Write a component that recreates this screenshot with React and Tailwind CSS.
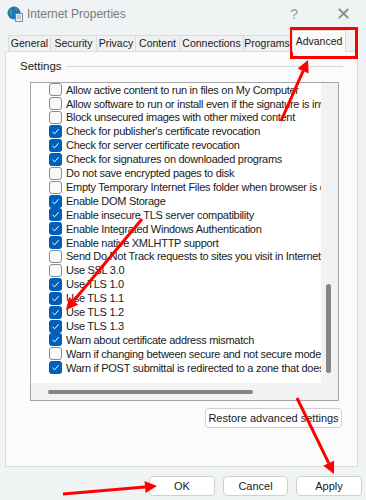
const items = [
  ["Allow active content to run in files on My Computer", false],
  ["Allow software to run or install even if the signature is invalid", false],
  ["Block unsecured images with other mixed content", false],
  ["Check for publisher's certificate revocation", true],
  ["Check for server certificate revocation", true],
  ["Check for signatures on downloaded programs", true],
  ["Do not save encrypted pages to disk", false],
  ["Empty Temporary Internet Files folder when browser is closed", false],
  ["Enable DOM Storage", true],
  ["Enable insecure TLS server compatibility", true],
  ["Enable Integrated Windows Authentication", true],
  ["Enable native XMLHTTP support", true],
  ["Send Do Not Track requests to sites you visit in Internet Explorer", false],
  ["Use SSL 3.0", false],
  ["Use TLS 1.0", true],
  ["Use TLS 1.1", true],
  ["Use TLS 1.2", true],
  ["Use TLS 1.3", true],
  ["Warn about certificate address mismatch", true],
  ["Warn if changing between secure and not secure mode", false],
  ["Warn if POST submittal is redirected to a zone that does not permit posts", true],
];

const tabs = [
  ["General", 42],
  ["Security", 46],
  ["Privacy", 39],
  ["Content", 44],
  ["Connections", 64],
  ["Programs", 47],
];

function Check({ on }) {
  if (!on) {
    return <span className="w-[13px] h-[13px] shrink-0 rounded-[3px] border border-[#8c8c8c] bg-[#f9f9f9]" />;
  }
  return (
    <span className="w-[13px] h-[13px] shrink-0 rounded-[3px] bg-[#005fb8] flex items-center justify-center">
      <svg width="9" height="9" viewBox="0 0 9 9">
        <path d="M1.5 4.8 L3.6 6.8 L7.6 2.2" fill="none" stroke="white" strokeWidth="1" />
      </svg>
    </span>
  );
}

function Arrow({ x1, y1, x2, y2 }) {
  const dx = x2 - x1;
  const dy = y2 - y1;
  const len = Math.hypot(dx, dy);
  const ux = dx / len;
  const uy = dy / len;
  const hl = 12;
  const hw = 6;
  const bx = x2 - ux * hl;
  const by = y2 - uy * hl;
  const pts = `${x2},${y2} ${bx - uy * hw},${by + ux * hw} ${bx + uy * hw},${by - ux * hw}`;
  return (
    <g>
      <line x1={x1} y1={y1} x2={bx} y2={by} stroke="#f00" strokeWidth="3" />
      <polygon points={pts} fill="#f00" />
    </g>
  );
}

function Btn({ children, className }) {
  return (
    <button className={"h-[20px] rounded-[4px] border border-[#d0d0d0] bg-white text-[11px] text-[#1a1a1a] whitespace-nowrap flex items-center justify-center " + className}>
      {children}
    </button>
  );
}

export default function App() {
  return (
    <div className="relative w-[366px] h-[500px] overflow-hidden bg-[#f0f3f4] font-['Liberation_Sans',sans-serif]">
      {/* Title bar */}
      <div className="h-[28px] flex items-center pl-[7px]">
        <svg width="16" height="16" viewBox="0 0 16 16">
          <circle cx="7" cy="7" r="6.5" fill="#1e73c8" />
          <path d="M3 3.5 C5 2.5 6 4 5 5.5 C4 7 6 8 5 10 C4 10 2.5 8 2.5 6 Z" fill="#3fa34d" />
          <path d="M8 2 C10 2 12 4 11 5 C9.5 5 9 4 8 2 Z" fill="#3fa34d" />
          <rect x="8.5" y="7.5" width="7" height="8" fill="#e8ecf0" stroke="#6c7a89" strokeWidth="0.8" />
          <line x1="10" y1="10" x2="14" y2="10" stroke="#8a96a3" strokeWidth="0.8" />
          <line x1="10" y1="12" x2="14" y2="12" stroke="#8a96a3" strokeWidth="0.8" />
        </svg>
        <span className="ml-[4px] text-[12px] text-[#7a7a7a]">Internet Properties</span>
        <span className="ml-auto text-[14px] text-[#9a9a9a] mr-[38px]">?</span>
        <span className="text-[18px] leading-none text-[#8a8a8a] mr-[15px] font-light">✕</span>
      </div>

      {/* Tabs */}
      <div className="h-[23px] flex items-end pl-[8px]">
        {tabs.map(([t, w]) => (
          <div
            key={t}
            style={{ width: w }}
            className="h-[16px] border-t border-l border-[#dcdcdc] bg-[#f0f0f0] text-[10.5px] text-[#1a1a1a] flex items-center justify-center"
          >
            {t}
          </div>
        ))}
        <div className="relative z-10 -mb-px ml-[2px] w-[54px] h-[22px] border-t border-x border-[#dcdcdc] bg-[#fbfbfb] text-[10.5px] text-[#1a1a1a] flex items-center justify-center">
          Advanced
        </div>
      </div>

      {/* Panel */}
      <div className="ml-[5px] w-[353px] h-[416px] border border-[#dcdcdc] bg-[#fbfbfb] flex flex-col">
        <div className="flex items-center h-[30px] pl-[14px] pr-[14px]">
          <span className="text-[11.5px] text-[#1a1a1a]">Settings</span>
          <span className="flex-1 h-px bg-[#d6d6d6] ml-[4px] -mt-[2px]" />
        </div>

        <div className="ml-[24px] w-[309px] h-[319px] border border-[#a6a6a6] bg-white grid grid-cols-[290px_17px] grid-rows-[300px_17px]">
          <div className="overflow-hidden">
            {items.map(([t, on]) => (
              <div key={t} className="h-[13.9px] flex items-center pl-[18px] whitespace-nowrap">
                <Check on={on} />
                <span className="ml-[4px] text-[11px] tracking-[-0.28px] text-[#1a1a1a]">{t}</span>
              </div>
            ))}
          </div>
          <div className="bg-[#f2f2f2] relative">
            <div className="absolute left-[5px] top-[201px] w-[5px] h-[89px] rounded-full bg-[#858585]" />
          </div>
          <div className="bg-[#f2f2f2] flex items-center pl-[17px]">
            <div className="w-[205px] h-[4px] rounded-full bg-[#858585]" />
          </div>
          <div className="bg-[#f2f2f2]" />
        </div>

        <div className="flex justify-end mt-[7px] pr-[15px]">
          <Btn className="w-[137px] text-[10.5px]">Restore advanced settings</Btn>
        </div>
      </div>

      {/* Dialog buttons */}
      <div className="flex justify-end gap-[8px] mt-[9px] pr-[4px]">
        <Btn className="w-[66px]">OK</Btn>
        <Btn className="w-[65px]">Cancel</Btn>
        <Btn className="w-[66px]">Apply</Btn>
      </div>

      {/* Annotation arrows */}
      <svg className="absolute inset-0 pointer-events-none" width="366" height="500">
        <rect x="291.5" y="28.5" width="65" height="29" fill="none" stroke="#f00" strokeWidth="3" />
        <Arrow x1={281} y1={121} x2={308} y2={60} />
        <Arrow x1={142} y1={219} x2={66} y2={310} />
        <Arrow x1={297} y1={398} x2={334} y2={474} />
        <Arrow x1={63} y1={494} x2={157} y2={486} />
      </svg>
    </div>
  );
}
